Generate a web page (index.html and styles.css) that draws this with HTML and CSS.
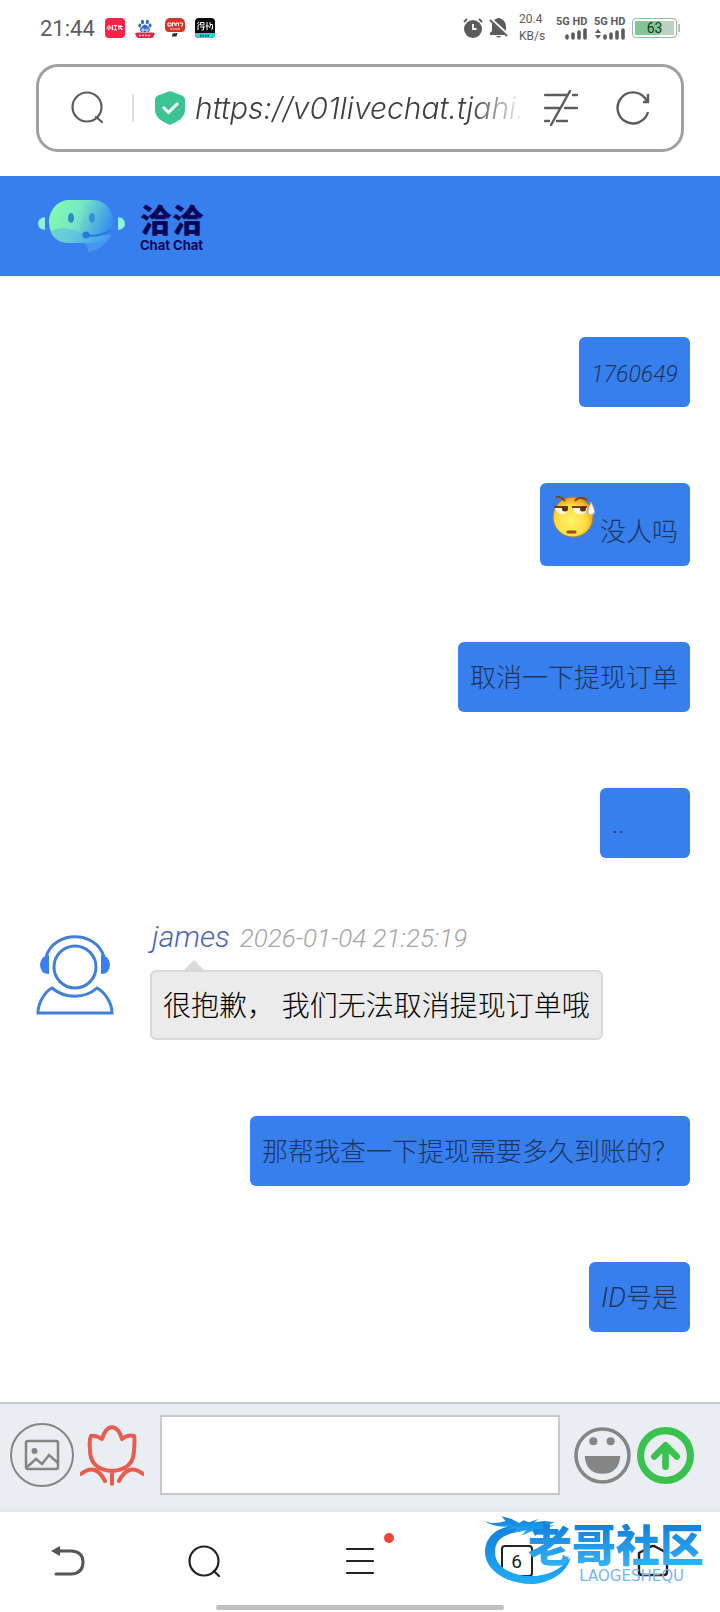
FILE: index.html
```html
<!DOCTYPE html>
<html lang="zh-CN">
<head>
<meta charset="utf-8">
<meta name="viewport" content="width=device-width, initial-scale=1">
<title>Chat Chat</title>
<link rel="stylesheet" href="styles.css">
</head>
<body>
<div class="status-bar">
  <div class="status-left">
    <span class="clock">21:44</span>
    <svg class="app-icon" viewBox="0 0 20 20" aria-hidden="true"><rect width="20" height="20" rx="4" fill="#f9234a"/><path d="M4 7v5l-1-.5M2.600 8.500L2 11M5.500 8.500L6 11M8 7L7 9l1 0L7 11.500H8.500M9 7.500H12M10.500 7.500V12M8.800 12H12M13 8.500H17.500M14 7v5M16 7L15 10L17.500 11.500M16.500 10v2" stroke="#fff" fill="none"/></svg>
    <svg class="app-icon" viewBox="0 0 20 20" aria-hidden="true"><g fill="#3569c9"><ellipse cx="7.500" cy="4" rx="1.600" ry="2.200"/><ellipse cx="12.300" cy="4" rx="1.600" ry="2.200"/><ellipse cx="4.800" cy="7.500" rx="1.500" ry="2"/><ellipse cx="15" cy="7.500" rx="1.500" ry="2"/><path d="M10 6.500C12 7 15 10 15 12Q15 14 12 14H8Q5 14 5 12C5 10 8 7 10 6.500Z"/></g><path d="M7 11h2v2H7zM11 10.500V13H13V10.500" stroke="#fff" fill="none" stroke-width=".8"/><path d="M0 15L3 14.500H17L20 15L18.500 19Q18 20 16 20H4Q2 20 1.500 19Z" fill="#d62c50"/><path d="M4 17.500H16" stroke="#f7bcc8" stroke-width="1.500" stroke-dasharray="2 1"/></svg>
    <svg class="app-icon" viewBox="0 0 20 20" aria-hidden="true"><path d="M4 0H16Q20 1 20 6V10Q20 14 16 14H4Q0 14 0 10V6Q0 1 4 0Z" fill="#d8322d"/><path d="M3 5H6V8H3ZM7.500 4.500V8.500M7.500 5H10V8M11 8V5H13.500V8M14.500 5H17.500V7.500L16 8.500" stroke="#fff" fill="none"/><path d="M5 11H15" stroke="#f7b4aa" stroke-width="1.500" stroke-dasharray="2 .6"/><path d="M7.500 15.500L12.500 15L11.500 18.500H7Z" fill="#2c2930"/></svg>
    <svg class="app-icon" viewBox="0 0 20 20" aria-hidden="true"><rect width="20" height="20" rx="4" fill="#080808"/><path d="M0 15H20V17Q19 20 16 20H4Q1 20 0 17Z" fill="#27d9d2"/><path d="M4 4L2.500 6M4.500 6L3 8V12M5.500 4.500H9V7H5.500ZM5 9H10M8.500 8.500V12H6.500M12 4V12M10.500 8H14M15 4V6.500H17.500V11H16M15.500 7L14.500 10" stroke="#fff" fill="none"/><path d="M5 17.800H14" stroke="#15686b" stroke-width="2.500" stroke-dasharray="1.500 1"/></svg>
  </div>
  <div class="status-right">
    <svg class="status-icon" viewBox="0 0 20 20" aria-hidden="true"><circle cx="10" cy="11" r="9" fill="#5b5b5b"/><path d="M1 4L4 1M16 1L19 4" stroke="#5b5b5b" stroke-width="1.800"/><path d="M10 6V11H13.500" fill="none" stroke="#fff" stroke-width="1.800"/></svg>
    <svg class="status-icon" viewBox="0 0 20 20" aria-hidden="true"><path d="M5 2Q8 0 10 0Q17 2 17 9V13L5 2ZM3 5L16 17H1V15L3 13ZM7 18H12Q10 21 7 18Z" fill="#5b5b5b"/><path d="M1 2L18 18" stroke="#5b5b5b" stroke-width="1.800"/></svg>
    <span class="net-speed">20.4<br>KB/s</span>
    <span class="carrier">5G HD<svg class="signal" viewBox="0 0 32 12" aria-hidden="true"><path d="M11 10V8M17 10V6M23 10V4M29 10V2" stroke="#5b5b5b" stroke-width="3.600" stroke-linecap="round"/></svg></span>
    <span class="carrier">5G HD<svg class="signal" viewBox="0 0 32 12" aria-hidden="true"><path d="M1 5L4 1L7 5ZM1 7L4 11L7 7Z" fill="#5b5b5b"/><path d="M11 10V8M17 10V6M23 10V4M29 10V2" stroke="#5b5b5b" stroke-width="3.600" stroke-linecap="round"/></svg></span>
    <span class="battery">63</span>
  </div>
</div>

<form class="address-bar">
  <svg class="address-icon" viewBox="0 0 34 34" aria-hidden="true"><g fill="none" stroke="#5c5c5c" stroke-width="2.200" stroke-linecap="round"><circle cx="17" cy="16" r="14.500"/><path d="M26 26L32 31"/></g></svg>
  <span class="divider"></span>
  <svg class="shield" viewBox="0 0 32 34" aria-hidden="true"><path d="M14.500 .6Q16 0 17.500 .6L28 4.500Q31 6 31 9V19C31 27 23 31 16 34C9 31 1 27 1 19V9Q1 6 4 4.500Z" fill="#3cc495"/><path d="M9 16L14.500 21.500L24 12" fill="none" stroke="#fff" stroke-width="3"/></svg>
  <input class="url" type="text" aria-label="网址" value="https://v01livechat.tjahi." readonly>
  <button class="icon-button" type="button" aria-label="阅读模式"><svg class="address-icon" viewBox="0 0 34 36"><path d="M1 5H23M29 5H33M1 18H15M21 18H33M1 31H5M13 31H23M26 1L7 35" fill="none" stroke="#5c5c5c" stroke-width="2.400" stroke-linecap="round"/></svg></button>
  <button class="icon-button reload" type="button" aria-label="刷新"><svg class="address-icon" viewBox="0 0 34 34"><path d="M32 21A15.500 15.500 0 1 1 29 7L31 10M32 3V11H27" fill="none" stroke="#5c5c5c" stroke-width="2.400"/></svg></button>
</form>

<header class="brand-bar">
  <svg class="brand-bot" viewBox="0 0 88 54" aria-hidden="true">
    <defs><linearGradient id="bot" x1="0" y1="0.200" x2="1" y2="0.500"><stop offset="0" stop-color="#83fda9"/><stop offset=".45" stop-color="#76e7c5"/><stop offset="1" stop-color="#348df1"/></linearGradient></defs>
    <path d="M7 18V31Q0 30 0 24.500Q0 19 7 18Z" fill="#8df0db"/><path d="M80 18Q87 19 87 25Q87 30 80 31Z" fill="#8df0db"/>
    <path d="M31 1H54C68 1 76 12 75 25C75 37 66 44 54 44H31C18 44 11 35 11 23S20 1 31 1Z" fill="url(#bot)"/>
    <path d="M12 32Q28 25 46 36H73Q68 49 50 53Q51 48 46 44H30Q17 43 12 32Z" fill="#55b0f2" opacity=".5"/>
    <path d="M42 2Q48 18 38 30" fill="none" stroke="#8af1c0" stroke-width="2" opacity=".25"/>
    <ellipse cx="33" cy="19" rx="3" ry="5" fill="#328bc9"/><ellipse cx="54" cy="19" rx="3" ry="5" fill="#358fdd"/>
    <circle cx="48" cy="36" r="3.500" fill="#2877dc"/><path d="M48 36C57 38 68 35 73 31" fill="none" stroke="#2877dc" stroke-width="2"/>
  </svg>
  <div class="brand-name"><span class="brand-cn">洽洽</span><span class="brand-en">Chat Chat</span></div>
</header>

<main class="chat">
  <div class="bubble"><span class="latin">1760649</span></div>
  <div class="bubble with-emoji"><svg class="emoji" viewBox="0 0 44 46" role="img" aria-label="尴尬流汗">
    <defs><radialGradient id="face" cx=".45" cy=".6" r=".6"><stop offset="0" stop-color="#fff26b"/><stop offset=".65" stop-color="#fddc3e"/><stop offset="1" stop-color="#e69b22"/></radialGradient></defs>
    <circle cx="21" cy="22" r="20" fill="url(#face)" stroke="#b77b2a"/>
    <path d="M3 13H16Q15 20 9 19Q4 18 3 13ZM21 13H35Q34 20 28 19Q22 19 21 13Z" fill="#fff6df"/>
    <path d="M2 12H16M20 12H35" stroke="#743b10" stroke-width="2"/><ellipse cx="13" cy="14" rx="3" ry="2.500" fill="#593012"/><ellipse cx="31" cy="14" rx="3" ry="2.500" fill="#593012"/>
    <path d="M4 2Q9 1 13 6M23 6Q27 0 35 5" fill="none" stroke="#85430e" stroke-width="2"/>
    <path d="M16 37H23" fill="none" stroke="#9a4b0b" stroke-width="3" stroke-linecap="round"/>
    <path d="M39 7Q46 20 39 20Q33 20 39 7Z" fill="#fffaf5" stroke="#c4a49c"/>
  </svg><span>没人吗</span></div>
  <div class="bubble">取消一下提现订单</div>
  <div class="bubble short">..</div>
  <article class="agent-message">
    <svg class="avatar" viewBox="0 0 78 80" role="img" aria-label="客服"><g fill="none" stroke="#4280d8" stroke-width="3"><circle cx="39" cy="32" r="21"/><path d="M10 22C18 -5 60 -5 68 22"/><path d="M2 78C2 69 8 57 16 53C29 64 49 64 61 53C70 58 76 69 76 78Z"/></g><path d="M13 20V39Q4 39 4 29Q5 21 13 20ZM65 20V39Q74 39 74 29Q73 21 65 20Z" fill="#377fec"/></svg>
    <div class="agent-body">
      <div class="agent-meta"><span class="agent-name">james</span><time class="agent-time" datetime="2026-01-04T21:25:19">2026-01-04 21:25:19</time></div>
      <div class="agent-bubble">很抱歉， 我们无法取消提现订单哦</div>
    </div>
  </article>
  <div class="bubble">那帮我查一下提现需要多久到账的？</div>
  <div class="bubble"><span class="latin-large">ID</span>号是</div>
</main>

<form class="composer">
  <button class="icon-button" type="button" aria-label="发送图片"><svg class="tool-icon" viewBox="0 0 64 64"><circle cx="32" cy="32" r="31" fill="none" stroke="#858585" stroke-width="2"/><rect x="16" y="18" width="32" height="28" rx="2" fill="none" stroke="#858585" stroke-width="2.500"/><circle cx="24.500" cy="28" r="3" fill="#858585"/><path d="M17 44L26 36L32 41L39 32L48 40" fill="none" stroke="#858585" stroke-width="2.500"/></svg></button>
  <button class="icon-button" type="button" aria-label="送花"><svg class="tool-icon" viewBox="0 0 64 64"><path d="M22 16Q25 5 32 4Q39 5 42 16Q48 11 54 13Q55 17 54 27C54 40 47 47 32 48C17 47 10 40 10 27Q9 17 11 13Q16 12 22 16ZM32 48V61M1 51C11 43 19 46 25 58M63 51C53 43 45 46 39 58" fill="none" stroke="#e85d50" stroke-width="4" stroke-linejoin="round" stroke-linecap="round"/></svg></button>
  <input class="message-input" type="text" aria-label="输入消息">
  <button class="icon-button" type="button" aria-label="表情"><svg class="action-icon" viewBox="0 0 56 56"><circle cx="28" cy="28" r="26" fill="none" stroke="#858585" stroke-width="3.500"/><circle cx="19" cy="14" r="4" fill="#858585"/><circle cx="36" cy="14" r="4" fill="#858585"/><path d="M10.500 28.500H45.500Q44 46 28 46T10.500 28.500Z" fill="#858585"/></svg></button>
  <button class="icon-button" type="submit" aria-label="发送"><svg class="action-icon" viewBox="0 0 56 56"><circle cx="28" cy="28" r="24.500" fill="none" stroke="#39c24d" stroke-width="7"/><path d="M17 29L28 18L39 29M28 19V39" fill="none" stroke="#39c24d" stroke-width="6.500" stroke-linecap="round" stroke-linejoin="round"/></svg></button>
</form>

<nav class="browser-nav">
  <div class="nav-row">
    <button class="icon-button" type="button" aria-label="返回"><svg class="nav-icon" viewBox="0 0 34 34"><path d="M7 7H21Q32 8 32 18Q32 29 21 30H5" fill="none" stroke="#555" stroke-width="3" stroke-linecap="round"/><path d="M0 7L9 2V12Z" fill="#555"/></svg></button>
    <button class="icon-button" type="button" aria-label="搜索"><svg class="nav-icon" viewBox="0 0 34 34"><g fill="none" stroke="#222" stroke-width="2.200" stroke-linecap="round"><circle cx="17" cy="17" r="14.500"/><path d="M27 27L32 32"/></g></svg></button>
    <button class="icon-button menu" type="button" aria-label="菜单"><svg class="nav-icon" viewBox="0 0 34 34"><path d="M4 5H30M4 17H30M4 29H30" stroke="#222" stroke-width="2.200" stroke-linecap="round"/></svg><span class="badge"></span></button>
    <button class="icon-button" type="button" aria-label="标签页，6 个"><span class="tab-count">6</span></button>
    <button class="icon-button" type="button" aria-label="主页"><svg class="nav-icon" viewBox="0 0 34 34"><path d="M3 9L14 3Q17 1 20 3L31 9V28Q31 31 28 31H6Q3 31 3 28Z" fill="none" stroke="#222" stroke-width="2.400" stroke-linejoin="round"/></svg></button>
  </div>
  <span class="home-indicator"></span>
  <div class="watermark">
    <svg class="watermark-dragon" viewBox="30 45 280 220" aria-hidden="true">
      <defs><linearGradient id="sea" x1="0" y1="0" x2="0" y2="1"><stop offset="0" stop-color="#127ed8"/><stop offset="1" stop-color="#21adf6"/></linearGradient></defs>
      <g fill="url(#sea)"><path d="M130 80C70 85 42 120 42 160C42 215 110 256 180 256C240 254 290 220 300 175C270 215 225 232 180 232C120 230 72 205 72 160C72 125 95 105 150 98Z"/><path d="M38 65C62 76 82 72 104 66L92 52L122 60L145 72L158 64L174 70L204 60L190 70L220 66L252 70L226 80H252L230 86L248 99L220 94L232 108L204 96L194 112L184 96L152 110L166 94L124 102L142 88L104 94L122 82C90 86 60 80 38 65Z"/></g>
    </svg>
    <div class="watermark-text"><span class="watermark-cn">老哥社区</span><span class="watermark-en">LAOGESHEQU</span></div>
  </div>
</nav>
</body>
</html>
```
FILE: styles.css
```css
* { box-sizing: border-box; }

body {
  margin: 0;
  min-height: 100vh;
  display: flex;
  flex-direction: column;
  background: #fefefe;
  color: #1d355f;
  font-family: Roboto, "Noto Sans CJK SC", sans-serif;
  font-weight: 300;
}

svg { display: block; flex: none; }

.icon-button {
  display: flex;
  align-items: center;
  justify-content: center;
  padding: 0;
  border: 0;
  background: none;
}

/* Phone status bar */
.status-bar {
  display: flex;
  justify-content: space-between;
  align-items: center;
  height: 56px;
  padding: 0 43px 0 40px;
  color: #5b5b5b;
}

.status-left { display: flex; align-items: center; gap: 10px; }
.clock { font-size: 22px; font-weight: 400; }
.app-icon { width: 20px; height: 20px; }
.status-right { display: flex; align-items: center; gap: 6px; }
.status-icon { width: 20px; height: 20px; }
.net-speed { width: 28px; margin: 0 3px 0 4px; font-size: 12px; font-weight: 400; line-height: 17px; white-space: nowrap; }
.carrier { display: flex; flex-direction: column; width: 32px; gap: 1px; font-size: 11px; font-weight: 700; line-height: 11px; white-space: nowrap; }
.signal { width: 32px; height: 12px; }

.battery {
  position: relative;
  width: 45px;
  height: 20px;
  border: 1px solid #92b99c;
  border-radius: 4px;
  background: linear-gradient(90deg, #81c795 63%, #b9d3c0 63%) content-box;
  padding: 2px;
  color: #173820;
  font-size: 14px;
  font-weight: 400;
  line-height: 14px;
  text-align: center;
}

.battery::after {
  content: "";
  position: absolute;
  top: 5px;
  right: -4px;
  width: 2px;
  height: 8px;
  background: #bbb;
}

/* Browser address bar */
.address-bar {
  display: flex;
  align-items: center;
  height: 88px;
  margin: 8px 36px 24px;
  padding: 0 31px 0 31px;
  border: 3px solid #a0a0a0;
  border-radius: 22px;
  background: #fff;
}

.address-icon { width: 34px; height: 36px; }
.divider { width: 2px; height: 28px; margin: 0 20px 0 28px; background: #ddd; }
.shield { width: 32px; height: 34px; }

.url {
  flex: 1;
  min-width: 0;
  margin: 0 20px 0 9px;
  padding: 0;
  border: 0;
  background: none;
  color: #3f3f3f;
  font-family: Inter, sans-serif;
  font-size: 30px;
  font-style: italic;
  font-weight: 300;
  -webkit-mask-image: linear-gradient(90deg, #000 84%, transparent);
  mask-image: linear-gradient(90deg, #000 84%, transparent);
}

.reload { margin-left: 38px; }

/* Brand header */
.brand-bar {
  display: flex;
  align-items: center;
  gap: 14px;
  height: 100px;
  padding: 0 38px;
  background: #377fec;
  color: #06065a;
}

.brand-bot { width: 88px; height: 54px; }
.brand-name { display: flex; flex-direction: column; padding-top: 4px; }
.brand-cn { font-size: 32px; font-weight: 900; line-height: 34px; }
.brand-en { font-family: Inter, sans-serif; font-size: 13px; font-weight: 700; line-height: 14px; }

/* Conversation */
.chat {
  flex: 1;
  display: flex;
  flex-direction: column;
  align-items: flex-end;
  gap: 76px;
  padding: 61px 30px 68px;
}

.bubble {
  min-height: 70px;
  padding: 17px 12px 15px;
  border-radius: 6px;
  background: #377fec;
  font-size: 26px;
  line-height: 38px;
}

.short { min-width: 90px; }
.latin, .latin-large { font-style: italic; line-height: 1; }
.latin { font-size: 23px; }
.latin-large { font-size: 28px; }
.with-emoji { display: flex; align-items: flex-end; gap: 4px; padding: 12px 12px 15px; }
.emoji { width: 44px; height: 46px; margin-bottom: 10px; }

.agent-message {
  display: flex;
  align-self: stretch;
  gap: 36px;
  margin-top: -12px;
  padding-left: 6px;
}

.avatar { width: 78px; height: 80px; margin-top: 13px; }
.agent-body { display: flex; flex-direction: column; align-items: flex-start; gap: 16px; }
.agent-meta { display: flex; align-items: baseline; gap: 10px; height: 32px; padding-left: 2px; line-height: 30px; font-style: italic; }
.agent-name { color: #4a63b8; font-size: 30px; }
.agent-time { color: #a5a5a5; font-size: 26px; }

.agent-bubble {
  position: relative;
  padding: 16px 11px 12px;
  border: 2px solid #d9d9d9;
  border-radius: 6px;
  background: #ebebeb;
  color: #000;
  font-size: 28px;
  line-height: 38px;
}

.agent-bubble::before {
  content: "";
  position: absolute;
  left: 30px;
  bottom: 100%;
  border: 12px solid transparent;
  border-top: 0;
  border-bottom-color: #d9d9d9;
}

/* Message composer */
.composer {
  display: flex;
  align-items: center;
  height: 110px;
  gap: 6px;
  padding: 0 26px 6px 10px;
  border-top: 2px solid #c7c9cb;
  background: linear-gradient(#eaeef2 94%, #e2e4e7);
}

.tool-icon { width: 64px; height: 64px; }
.action-icon { width: 57px; height: 57px; }

.message-input {
  flex: 1;
  min-width: 0;
  height: 80px;
  margin: 0 8px 0 10px;
  padding: 0 12px;
  border: 2px solid #c7c9cb;
  border-radius: 0;
  background: #fff;
  font-size: 26px;
}

/* Browser bottom navigation */
.browser-nav { position: relative; display: flex; flex-direction: column; align-items: center; height: 100px; background: #fefefe; }
.nav-row { display: grid; grid-template-columns: 135fr 137fr 176fr 137fr 135fr; align-self: stretch; height: 93px; padding-top: 5px; }
.nav-icon { width: 34px; height: 34px; }
.menu { position: relative; }
.badge { position: absolute; top: 16px; left: calc(50% + 24px); width: 10px; height: 10px; border-radius: 50%; background: #f04438; }
.tab-count { width: 32px; height: 32px; border: 2px solid #222; border-radius: 4px; color: #222; font-family: Roboto, sans-serif; font-size: 19px; font-weight: 400; line-height: 30px; }
.home-indicator { width: 40%; height: 5px; border-radius: 3px; background: #bfbfbf; }

.watermark { position: absolute; top: 2px; right: 16px; display: flex; pointer-events: none; }
.watermark-dragon { width: 93px; height: 73px; margin-right: -46px; }
.watermark-text { display: flex; flex-direction: column; padding-top: 10px; }

.watermark-cn {
  padding: 4px 0;
  background: linear-gradient(#127fdc, #37b6f8);
  -webkit-background-clip: text;
  background-clip: text;
  color: transparent;
  font-size: 44px;
  font-weight: 900;
  line-height: 38px;
}

.watermark-en { align-self: flex-end; margin-right: 20px; color: #76b8ea; font-family: "DejaVu Sans", sans-serif; font-size: 15px; font-weight: 400; line-height: 12px; }
```
